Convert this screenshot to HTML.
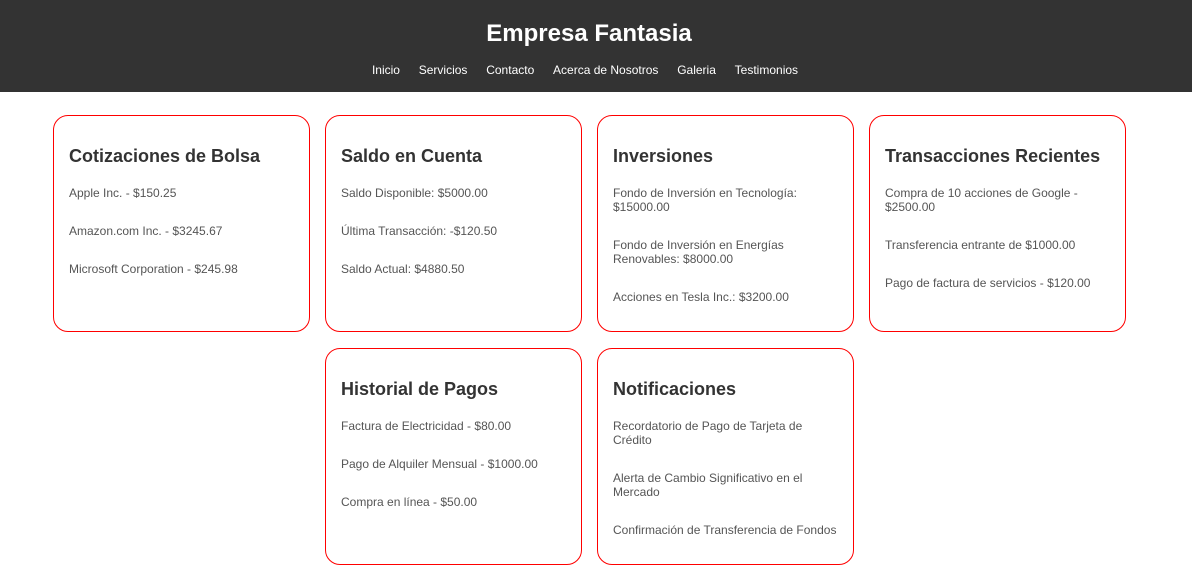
<!DOCTYPE html>
<html><head><meta charset="utf-8"><style>
*{box-sizing:border-box}
body{margin:0;font-family:"Liberation Sans",Arial,sans-serif;background:#fff}
header{background:#333;height:92px;color:#fff;text-align:center;padding-top:19px}
h1{margin:0;font-size:24px;line-height:30px;font-weight:bold;position:relative;left:-7px}
nav{margin-top:14px;font-size:12px;line-height:14px;position:relative;left:-11px}
nav a{color:#fff;text-decoration:none;margin:0 9.4px}
.wrap{display:flex;flex-wrap:wrap;justify-content:center;column-gap:15px;row-gap:16px;margin-left:53px;padding-top:23px;width:1073px}
.card{width:257px;height:217px;border:1px solid #f00;border-radius:15px;padding:30px 15px 0}
h2{margin:0 0 19px;font-size:18px;line-height:21px;color:#333}
p{margin:0 0 24px;font-size:12px;line-height:14px;color:#555}
</style></head><body>
<header><h1>Empresa Fantasia</h1>
<nav><a>Inicio</a><a>Servicios</a><a>Contacto</a><a>Acerca de Nosotros</a><a>Galeria</a><a>Testimonios</a></nav></header>
<div class="wrap">
<div class="card"><h2>Cotizaciones de Bolsa</h2><p>Apple Inc. - $150.25</p><p>Amazon.com Inc. - $3245.67</p><p>Microsoft Corporation - $245.98</p></div>
<div class="card"><h2>Saldo en Cuenta</h2><p>Saldo Disponible: $5000.00</p><p>Última Transacción: -$120.50</p><p>Saldo Actual: $4880.50</p></div>
<div class="card"><h2>Inversiones</h2><p>Fondo de Inversión en Tecnología: $15000.00</p><p>Fondo de Inversión en Energías Renovables: $8000.00</p><p>Acciones en Tesla Inc.: $3200.00</p></div>
<div class="card"><h2>Transacciones Recientes</h2><p>Compra de 10 acciones de Google - $2500.00</p><p>Transferencia entrante de $1000.00</p><p>Pago de factura de servicios - $120.00</p></div>
<div class="card"><h2>Historial de Pagos</h2><p>Factura de Electricidad - $80.00</p><p>Pago de Alquiler Mensual - $1000.00</p><p>Compra en línea - $50.00</p></div>
<div class="card"><h2>Notificaciones</h2><p>Recordatorio de Pago de Tarjeta de Crédito</p><p>Alerta de Cambio Significativo en el Mercado</p><p>Confirmación de Transferencia de Fondos</p></div>
</div>
</body></html>
